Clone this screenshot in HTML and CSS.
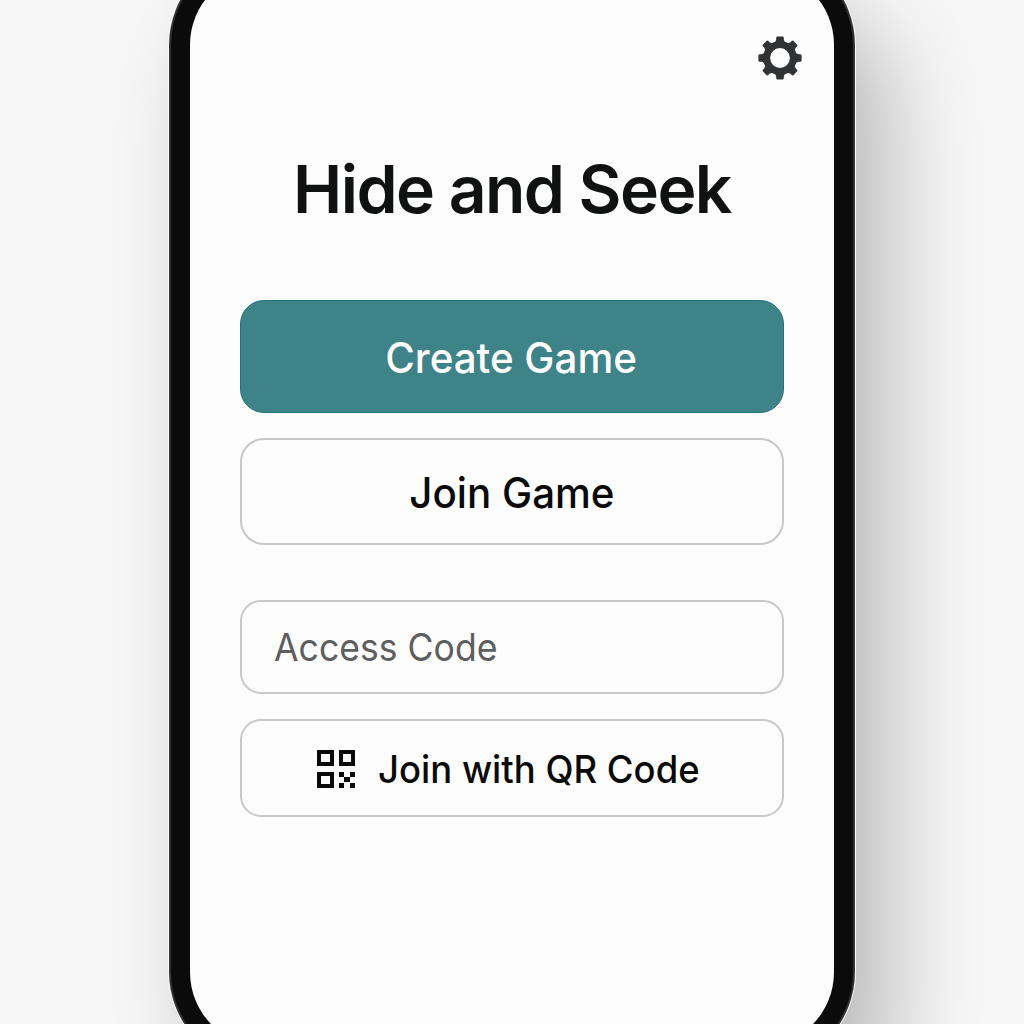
FILE: index.html
```html
<!DOCTYPE html>
<html lang="en">
<head>
<meta charset="utf-8">
<title>Hide and Seek</title>
<link rel="stylesheet" href="styles.css">
</head>
<body>
<div class="phone">
  <main class="screen">
    <header class="topbar">
      <button class="settings" aria-label="Settings">
        <svg width="44" height="44" viewBox="-22 -22 44 44">
          <defs><path id="tooth" d="M-6.5-13.5Q-4.2-16-3.8-18.6V-20.2Q-3.8-21.6-2.4-21.6H2.4Q3.8-21.6 3.8-20.2V-18.6Q4.2-16 6.5-13.5Z"/></defs>
          <g fill="#303233">
            <use href="#tooth"/><use href="#tooth" transform="rotate(45)"/><use href="#tooth" transform="rotate(90)"/><use href="#tooth" transform="rotate(135)"/>
            <use href="#tooth" transform="rotate(180)"/><use href="#tooth" transform="rotate(225)"/><use href="#tooth" transform="rotate(270)"/><use href="#tooth" transform="rotate(315)"/>
          </g>
          <circle r="13.4" fill="none" stroke="#303233" stroke-width="7"/>
        </svg>
      </button>
    </header>
    <h1 class="title">Hide and Seek</h1>
    <button class="btn create"><span class="label">Create Game</span></button>
    <button class="btn join"><span class="label">Join Game</span></button>
    <div class="btn code"><input class="code-input" type="text" placeholder="Access Code"></div>
    <button class="btn qr">
      <svg class="qr-icon" width="38" height="38" viewBox="0 0 38 38" shape-rendering="crispEdges">
        <path fill="none" stroke="#0a0a0a" stroke-width="4" d="M2 2h13v12H2zM24 2h12v12H24zM2 24h13v12H2z"/>
        <path fill="#0a0a0a" d="M22 22h5v5h-5zM33 22h5v5h-5zM27 27h6v5h-6zM22 33h5v5h-5zM33 33h5v5h-5z"/>
      </svg>
      <span class="label">Join with QR Code</span>
    </button>
  </main>
</div>
</body>
</html>
```
FILE: styles.css
```css
* { box-sizing: border-box; }
html, body { height: 100%; }
body {
  margin: 0;
  overflow: hidden;
  background: #f6f6f6;
  font-family: Inter, "Liberation Sans", sans-serif;
  color: #101111;
}
.phone {
  width: 686px;
  height: 1119px;
  margin: -51px 0 0 169px;
  padding: 19px;
  border: 2px solid #333435;
  border-radius: 96px;
  background: #0b0b0b;
  box-shadow: 0 0 0 1px #fafafa, 36px 62px 90px rgba(0, 0, 0, .24), 0 0 30px rgba(0, 0, 0, .02);
}
.screen {
  height: 100%;
  padding: 66px 50px 0;
  border-radius: 75px;
  background: #fdfdfd;
  display: flex;
  flex-direction: column;
}
.topbar { display: flex; justify-content: flex-end; margin-right: -18px; }
.settings { width: 44px; height: 44px; padding: 0; border: 0; background: none; }
.settings svg { display: block; }
.title {
  margin: 69px 0 0;
  line-height: 80px;
  font-size: 66px;
  font-weight: 600;
  letter-spacing: -1.55px;
  text-align: center;
  white-space: nowrap;
}
.btn {
  width: 544px;
  margin: 0;
  padding: 0;
  border: 2px solid #c6c8c9;
  border-radius: 24px;
  background: transparent;
  font-family: inherit;
  font-weight: 500;
  color: #0a0a0a;
  display: flex;
  align-items: center;
  justify-content: center;
  white-space: nowrap;
}
.label { transform: scaleX(.96); }
.create {
  height: 113px;
  margin-top: 71px;
  padding: 1px 2px 0 0;
  border: 1px solid #23777b;
  background: #3d8388;
  color: #fff;
  font-size: 42px;
}
.join { height: 107px; margin-top: 25px; padding-top: 1px; font-size: 42px; }
.code { height: 94px; margin-top: 55px; padding: 0 32px; border-radius: 21px; }
.code-input {
  width: 100%;
  padding: 0;
  border: 0;
  outline: 0;
  background: transparent;
  font-family: inherit;
  font-size: 38px;
  font-weight: 400;
  transform: scaleX(.937);
  transform-origin: left;
}
.code-input::placeholder { color: #5d5e5f; opacity: 1; }
.qr {
  height: 98px;
  margin-top: 25px;
  padding: 2px 0 0 7px;
  border-radius: 21px;
  font-size: 38px;
  gap: 23px;
}
.qr .label { transform-origin: left; }
```
